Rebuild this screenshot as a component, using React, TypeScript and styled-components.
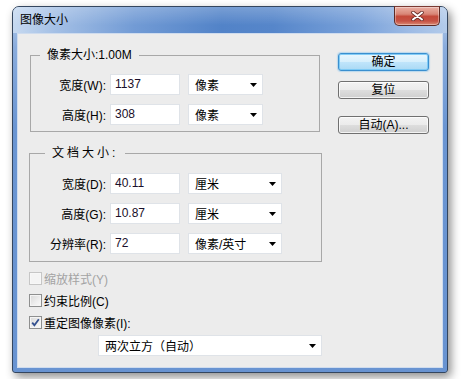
import styled, { createGlobalStyle } from 'styled-components';

const GlobalStyle = createGlobalStyle`
  html, body {
    margin: 0;
    padding: 0;
    background: #ffffff;
  }

  body {
    font-family: "Liberation Sans", "Noto Sans CJK SC", sans-serif;
    font-size: 12px;
    color: #000000;
  }

  * {
    box-sizing: border-box;
  }
`;

const Page = styled.div`
  width: 470px;
  height: 379px;
  padding: 6px 0 0 12px;
  overflow: hidden;
`;

const Window = styled.div`
  display: flex;
  flex-direction: column;
  width: 436px;
  height: 367px;
  border: 1px solid #34465f;
  border-radius: 7px 7px 3px 3px;
  background: linear-gradient(180deg, #b9d0ec 0px, #8aacdc 40px, #6a95d2 120px, #6893d1 100%);
  box-shadow: 3px 4px 10px rgba(0, 0, 0, 0.45);
`;

const TitleBar = styled.div`
  display: flex;
  align-items: flex-start;
  justify-content: space-between;
  height: 26px;
  padding: 0 7px 0 7px;
  border-radius: 6px 6px 0 0;
  background:
    linear-gradient(180deg, rgba(255, 255, 255, 0.22), rgba(255, 255, 255, 0) 70%),
    linear-gradient(90deg, #c6d9f0 0%, #a3bfe5 10%, #729bd5 28%, #5283c8 48%, #5686ca 60%, #7aa2da 80%, #9fbce5 92%, #b3cbea 100%);
`;

const Title = styled.span`
  line-height: 26px;
  font-size: 12px;
  color: #000000;
`;

const CloseButton = styled.div`
  display: flex;
  align-items: center;
  justify-content: center;
  width: 46px;
  height: 20px;
  margin-top: -1px;
  border: 1px solid #5e2a24;
  border-top-color: #7a3a33;
  border-radius: 0 0 5px 5px;
  background: linear-gradient(180deg, #eab0a4 0%, #d88576 40%, #c4493a 52%, #c65244 78%, #db8a74 100%);
  box-shadow: inset 0 0 0 1px rgba(255, 255, 255, 0.35);
`;

const FrameBody = styled.div`
  flex: 1;
  display: flex;
  padding: 0 4px 4px;
`;

const Client = styled.div`
  flex: 1;
  display: flex;
  flex-direction: column;
  padding: 13px 0 0 11px;
  border: 1px solid #cfdcee;
  background: #ececec;
`;

const Main = styled.div`
  display: flex;
  align-items: flex-start;
`;

const LeftColumn = styled.div`
  display: flex;
  flex-direction: column;
  align-items: flex-start;
  width: 293px;
`;

// group box: fieldset with the caption sitting in its top border
const Group = styled.fieldset<{ $width: number; $pad: string; $top: number; $indent: number }>`
  width: ${({ $width }) => $width}px;
  min-width: 0;
  margin: ${({ $top }) => $top}px 0 0 ${({ $indent }) => $indent}px;
  padding: ${({ $pad }) => $pad};
  border: 1px solid #a8a8a8;
`;

const Legend = styled.legend<{ $inset: number; $spacing: number }>`
  margin-left: ${({ $inset }) => $inset}px;
  padding: 0 7px;
  line-height: 16px;
  font-size: 12px;
  letter-spacing: ${({ $spacing }) => $spacing}px;
  color: #000000;
`;

const Rows = styled.div`
  display: flex;
  flex-direction: column;
  gap: 9px;
`;

const Row = styled.div`
  display: flex;
  align-items: center;
  height: 21px;
`;

const Label = styled.span<{ $width: number }>`
  width: ${({ $width }) => $width}px;
  text-align: right;
  white-space: nowrap;
`;

const TextBox = styled.div`
  width: 70px;
  height: 21px;
  margin-left: 4px;
  padding: 0 4px;
  border: 1px solid #dfe3e8;
  background: #ffffff;
  line-height: 19px;
  color: #1a0f2a;
`;

const Select = styled.div<{ $width: number }>`
  display: flex;
  align-items: center;
  justify-content: space-between;
  width: ${({ $width }) => $width}px;
  height: 21px;
  padding: 0 5px 0 6px;
  border: 1px solid #dfe3e8;
  background: #ffffff;
  white-space: nowrap;
`;

const FieldSelect = styled(Select)`
  margin-left: 8px;
`;

const ButtonColumn = styled.div`
  display: flex;
  flex-direction: column;
  margin: 6px 0 0 16px;
`;

const Button = styled.button<{ $primary?: boolean; $gap: number }>`
  width: 91px;
  height: 18px;
  margin-top: ${({ $gap }) => $gap}px;
  padding: 0;
  border: 1px solid ${({ $primary }) => ($primary ? '#3a8fcf' : '#707070')};
  border-radius: 3px;
  background: ${({ $primary }) =>
    $primary
      ? 'linear-gradient(180deg, #eaf7fe 0%, #d6effc 50%, #bfe5fb 52%, #aad9f4 100%)'
      : 'linear-gradient(180deg, #f3f3f3 0%, #ebebeb 50%, #dddddd 52%, #cfcfcf 100%)'};
  box-shadow: ${({ $primary }) =>
    $primary
      ? 'inset 0 0 0 1px rgba(120, 200, 245, 0.9), 0 0 1px 1px rgba(90, 180, 240, 0.35)'
      : 'inset 0 0 0 1px rgba(255, 255, 255, 0.75)'};
  font-family: inherit;
  font-size: 12px;
  line-height: 16px;
  color: #000000;
`;

const CheckList = styled.div`
  display: flex;
  flex-direction: column;
  margin-top: 5px;
`;

const CheckRow = styled.div<{ $disabled?: boolean }>`
  display: flex;
  align-items: center;
  gap: 2px;
  height: 22px;
  color: ${({ $disabled }) => ($disabled ? '#a3a3a3' : '#000000')};
`;

const Box = styled.span<{ $disabled?: boolean }>`
  display: flex;
  align-items: center;
  justify-content: center;
  width: 13px;
  height: 13px;
  border: 1px solid ${({ $disabled }) => ($disabled ? '#c6c6c6' : '#8e8f8f')};
  background: ${({ $disabled }) =>
    $disabled ? '#f4f4f4' : 'linear-gradient(135deg, #d8d8d8 0%, #eeeeee 60%, #fafafa 100%)'};
  box-shadow: inset 0 0 0 1px ${({ $disabled }) => ($disabled ? '#f7f7f7' : '#f4f4f4')};
`;

const ResampleSelect = styled(Select)`
  margin: 2px 0 0 69px;
`;

function Arrow() {
  return (
    <svg width="7" height="4" viewBox="0 0 7 4">
      <polygon points="0,0 7,0 3.5,4" fill="#000000" />
    </svg>
  );
}

function Field({ label, value, unit, labelWidth, selectWidth }: {
  label: string;
  value: string;
  unit: string;
  labelWidth: number;
  selectWidth: number;
}) {
  return (
    <Row>
      <Label $width={labelWidth}>{label}</Label>
      <TextBox>{value}</TextBox>
      <FieldSelect $width={selectWidth}>
        <span>{unit}</span>
        <Arrow />
      </FieldSelect>
    </Row>
  );
}

function Check({ label, checked, disabled }: { label: string; checked?: boolean; disabled?: boolean }) {
  return (
    <CheckRow $disabled={disabled}>
      <Box $disabled={disabled}>
        {checked && (
          <svg width="9" height="9" viewBox="0 0 9 9">
            <path d="M1.2 4.6 L3.4 7.2 L7.8 1.2" fill="none" stroke="#33508f" strokeWidth="1.8" />
          </svg>
        )}
      </Box>
      <span>{label}</span>
    </CheckRow>
  );
}

export default function App() {
  return (
    <>
      <GlobalStyle />
      <Page>
        <Window>
          <TitleBar>
            <Title>图像大小</Title>
            <CloseButton>
              <svg width="13" height="10" viewBox="0 0 13 10">
                <path d="M2 1.5 L11 8.5 M11 1.5 L2 8.5" stroke="#6b2f2a" strokeWidth="3.6" strokeLinecap="round" />
                <path d="M2 1.5 L11 8.5 M11 1.5 L2 8.5" stroke="#ffffff" strokeWidth="2" strokeLinecap="round" />
              </svg>
            </CloseButton>
          </TitleBar>
          <FrameBody>
            <Client>
              <Main>
                <LeftColumn>
                  <Group $width={290} $pad="11px 0 6px" $top={0} $indent={1}>
                    <Legend $inset={9} $spacing={0}>像素大小:1.00M</Legend>
                    <Rows>
                      <Field label="宽度(W):" value="1137" unit="像素" labelWidth={75} selectWidth={75} />
                      <Field label="高度(H):" value="308" unit="像素" labelWidth={75} selectWidth={75} />
                    </Rows>
                  </Group>
                  <Group $width={293} $pad="12px 0 7px" $top={13} $indent={0}>
                    <Legend $inset={15} $spacing={3}>文档大小:</Legend>
                    <Rows>
                      <Field label="宽度(D):" value="40.11" unit="厘米" labelWidth={76} selectWidth={94} />
                      <Field label="高度(G):" value="10.87" unit="厘米" labelWidth={76} selectWidth={94} />
                      <Field label="分辨率(R):" value="72" unit="像素/英寸" labelWidth={76} selectWidth={94} />
                    </Rows>
                  </Group>
                </LeftColumn>
                <ButtonColumn>
                  <Button $primary $gap={0}>确定</Button>
                  <Button $gap={10}>复位</Button>
                  <Button $gap={17}>自动(A)...</Button>
                </ButtonColumn>
              </Main>
              <CheckList>
                <Check label="缩放样式(Y)" disabled />
                <Check label="约束比例(C)" />
                <Check label="重定图像像素(I):" checked />
              </CheckList>
              <ResampleSelect $width={224}>
                <span>两次立方（自动）</span>
                <Arrow />
              </ResampleSelect>
            </Client>
          </FrameBody>
        </Window>
      </Page>
    </>
  );
}
